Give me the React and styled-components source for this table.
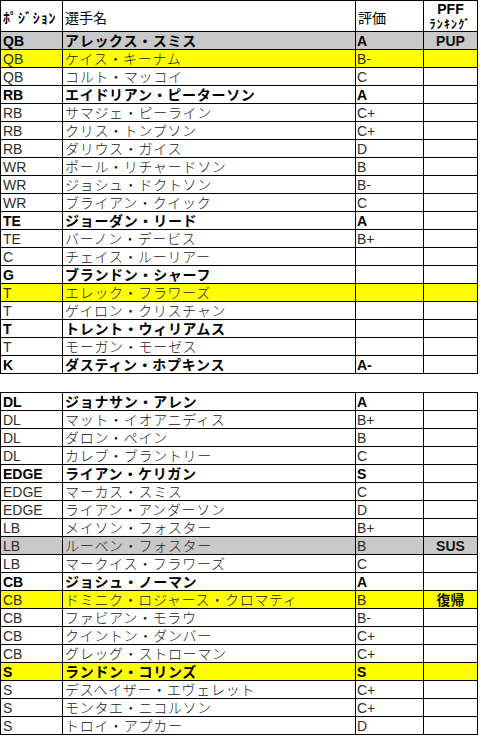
import React from "react";
import styled, { createGlobalStyle } from "styled-components";

const GlobalStyle = createGlobalStyle`
  html, body { margin: 0; padding: 0; background: #ffffff; }
  #root { width: 481px; min-height: 750px; }
`;

const LATIN = `"Liberation Sans", Arial, sans-serif`;
const CJK = `"Noto Sans CJK JP", "Liberation Sans", sans-serif`;

const TONES = { none: "#ffffff", gray: "#c9c9c9", yellow: "#ffff00" };

const Sheet = styled.div`
  display: flex;
  flex-direction: column;
  gap: 18px;
`;

const Table = styled.div`
  display: flex;
  flex-direction: column;
  width: max-content;
  border-left: 1px solid #000;
  border-top: 1px solid #000;
`;

const Row = styled.div`
  display: grid;
  grid-template-columns: 62px 293px 68px 54px;
  height: ${(p) => (p.$header ? 31 : 18)}px;
  background: ${(p) => TONES[p.$tone || "none"]};
`;

const Cell = styled.div`
  box-sizing: border-box;
  border-right: 1px solid #000;
  border-bottom: 1px solid #000;
  display: flex;
  align-items: flex-end;
  white-space: nowrap;
  font-size: 14px;
  line-height: 15px;
  color: ${(p) => (p.$bold ? "#000" : "#2e2e2e")};
  font-weight: ${(p) => (p.$bold ? 700 : 400)};
`;

const PosCell = styled(Cell)`
  font-family: ${LATIN};
  padding-left: 2px;
`;

const NameCell = styled(Cell)`
  font-family: ${CJK};
  font-weight: ${(p) => (p.$bold ? 700 : 300)};
  color: ${(p) => (p.$bold ? "#000" : "#222")};
  line-height: 17px;
  padding-left: 2px;
  letter-spacing: 0.7px;
`;

const GradeCell = styled(Cell)`
  font-family: ${LATIN};
  padding-left: 1px;
`;

const PffCell = styled(Cell)`
  justify-content: center;
  font-weight: 700;
  color: #111;
  font-family: ${(p) => (p.$cjk ? CJK : LATIN)};
  line-height: ${(p) => (p.$cjk ? 17 : 15)}px;
`;

const HeadCell = styled(Cell)`
  font-family: ${CJK};
  font-weight: 400;
  line-height: 18px;
  padding-left: 2px;
  padding-bottom: 5px;
  color: #000;
`;

const PosHead = styled(HeadCell)`
  font-weight: 700;
  letter-spacing: 0.9px;
`;

const PffHead = styled(Cell)`
  flex-direction: column;
  align-items: center;
  justify-content: flex-start;
  padding-top: 1px;
  color: #000;
`;

const PffTitle = styled.span`
  font-family: ${LATIN};
  font-weight: 700;
  font-size: 14px;
  line-height: 15px;
`;

const PffSub = styled.span`
  font-family: ${CJK};
  font-weight: 700;
  font-size: 12px;
  line-height: 14px;
  letter-spacing: 1.2px;
`;

const offense = [
  ["QB", "アレックス・スミス", "A", "PUP", "gray", true],
  ["QB", "ケイス・キーナム", "B-", "", "yellow", false],
  ["QB", "コルト・マッコイ", "C", "", "none", false],
  ["RB", "エイドリアン・ピーターソン", "A", "", "none", true],
  ["RB", "サマジェ・ピーライン", "C+", "", "none", false],
  ["RB", "クリス・トンプソン", "C+", "", "none", false],
  ["RB", "ダリウス・ガイス", "D", "", "none", false],
  ["WR", "ポール・リチャードソン", "B", "", "none", false],
  ["WR", "ジョシュ・ドクトソン", "B-", "", "none", false],
  ["WR", "ブライアン・クイック", "C", "", "none", false],
  ["TE", "ジョーダン・リード", "A", "", "none", true],
  ["TE", "バーノン・デービス", "B+", "", "none", false],
  ["C", "チェイス・ルーリアー", "", "", "none", false],
  ["G", "ブランドン・シャーフ", "", "", "none", true],
  ["T", "エレック・フラワーズ", "", "", "yellow", false],
  ["T", "ゲイロン・クリスチャン", "", "", "none", false],
  ["T", "トレント・ウィリアムス", "", "", "none", true],
  ["T", "モーガン・モーゼス", "", "", "none", false],
  ["K", "ダスティン・ホプキンス", "A-", "", "none", true],
];

const defense = [
  ["DL", "ジョナサン・アレン", "A", "", "none", true],
  ["DL", "マット・イオアニディス", "B+", "", "none", false],
  ["DL", "ダロン・ペイン", "B", "", "none", false],
  ["DL", "カレブ・ブラントリー", "C", "", "none", false],
  ["EDGE", "ライアン・ケリガン", "S", "", "none", true],
  ["EDGE", "マーカス・スミス", "C", "", "none", false],
  ["EDGE", "ライアン・アンダーソン", "D", "", "none", false],
  ["LB", "メイソン・フォスター", "B+", "", "none", false],
  ["LB", "ルーベン・フォスター", "B", "SUS", "gray", false],
  ["LB", "マークイス・フラワーズ", "C", "", "none", false],
  ["CB", "ジョシュ・ノーマン", "A", "", "none", true],
  ["CB", "ドミニク・ロジャース・クロマティ", "B", "復帰", "yellow", false],
  ["CB", "ファビアン・モラウ", "B-", "", "none", false],
  ["CB", "クイントン・ダンバー", "C+", "", "none", false],
  ["CB", "グレッグ・ストローマン", "C+", "", "none", false],
  ["S", "ランドン・コリンズ", "S", "", "yellow", true],
  ["S", "デスヘイザー・エヴェレット", "C+", "", "none", false],
  ["S", "モンタエ・ニコルソン", "C+", "", "none", false],
  ["S", "トロイ・アプカー", "D", "", "none", false],
];

const PlayerRow = ({ data }) => {
  const [pos, name, grade, pff, tone, bold] = data;
  const cjk = /[^\x00-\x7f]/.test(pff);
  return (
    <Row $tone={tone}>
      <PosCell $bold={bold}>{pos}</PosCell>
      <NameCell $bold={bold}>{name}</NameCell>
      <GradeCell $bold={bold}>{grade}</GradeCell>
      <PffCell $cjk={cjk}>{pff}</PffCell>
    </Row>
  );
};

export default function App() {
  return (
    <>
      <GlobalStyle />
      <Sheet>
        <Table>
          <Row $header>
            <PosHead>ﾎﾟｼﾞｼｮﾝ</PosHead>
            <HeadCell>選手名</HeadCell>
            <HeadCell>評価</HeadCell>
            <PffHead>
              <PffTitle>PFF</PffTitle>
              <PffSub>ﾗﾝｷﾝｸﾞ</PffSub>
            </PffHead>
          </Row>
          {offense.map((r, i) => (
            <PlayerRow key={i} data={r} />
          ))}
        </Table>
        <Table>
          {defense.map((r, i) => (
            <PlayerRow key={i} data={r} />
          ))}
        </Table>
      </Sheet>
    </>
  );
}
